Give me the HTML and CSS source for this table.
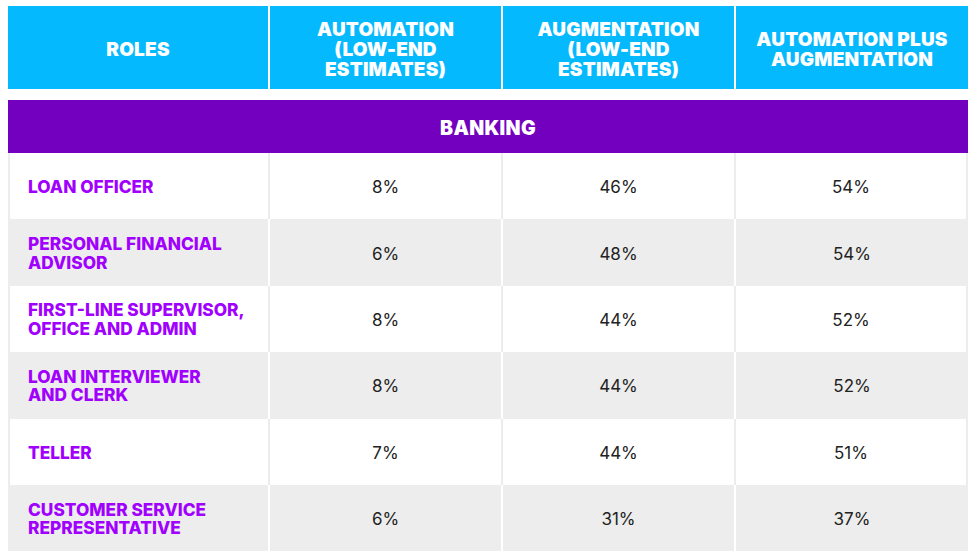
FILE: index.html
```html
<!DOCTYPE html>
<html lang="en">
<head>
<meta charset="utf-8">
<title>Roles — Banking</title>
<link rel="stylesheet" href="styles.css">
</head>
<body>
<div class="table">
  <div class="head">
    <div class="hcell"><span class="ln">ROLES</span></div>
    <div class="hcell"><span class="ln">AUTOMATION</span><span class="ln">(LOW-END</span><span class="ln">ESTIMATES)</span></div>
    <div class="hcell"><span class="ln">AUGMENTATION</span><span class="ln">(LOW-END</span><span class="ln">ESTIMATES)</span></div>
    <div class="hcell"><span class="ln">AUTOMATION PLUS</span><span class="ln">AUGMENTATION</span></div>
  </div>
  <div class="band">BANKING</div>
  <div class="row light">
    <div class="cell role"><span class="rl">LOAN OFFICER</span></div>
    <div class="cell num">8%</div>
    <div class="cell num">46%</div>
    <div class="cell num">54%</div>
  </div>
  <div class="row shade">
    <div class="cell role"><span class="rl">PERSONAL FINANCIAL</span><span class="rl">ADVISOR</span></div>
    <div class="cell num">6%</div>
    <div class="cell num">48%</div>
    <div class="cell num">54%</div>
  </div>
  <div class="row light">
    <div class="cell role"><span class="rl">FIRST-LINE SUPERVISOR,</span><span class="rl">OFFICE AND ADMIN</span></div>
    <div class="cell num">8%</div>
    <div class="cell num">44%</div>
    <div class="cell num">52%</div>
  </div>
  <div class="row shade">
    <div class="cell role"><span class="rl">LOAN INTERVIEWER</span><span class="rl">AND CLERK</span></div>
    <div class="cell num">8%</div>
    <div class="cell num">44%</div>
    <div class="cell num">52%</div>
  </div>
  <div class="row light">
    <div class="cell role"><span class="rl">TELLER</span></div>
    <div class="cell num">7%</div>
    <div class="cell num">44%</div>
    <div class="cell num">51%</div>
  </div>
  <div class="row shade">
    <div class="cell role"><span class="rl">CUSTOMER SERVICE</span><span class="rl">REPRESENTATIVE</span></div>
    <div class="cell num">6%</div>
    <div class="cell num">31%</div>
    <div class="cell num">37%</div>
  </div>
</div>
</body>
</html>
```

FILE: styles.css
```css
* { box-sizing: border-box; }

html, body {
  margin: 0;
  padding: 0;
  background: #ffffff;
}

body {
  padding: 6px 6px 0 8px;
  font-family: "Inter", "Liberation Sans", sans-serif;
}

.table {
  width: 960px;
  display: flex;
  flex-direction: column;
}

.head {
  display: grid;
  grid-template-columns: 260px 231px 231px 232px;
  column-gap: 2px;
  height: 83px;
  background: #ffffff;
}

.hcell {
  background: #05b9ff;
  color: #ffffff;
  font-weight: 900;
  font-size: 19px;
  line-height: 20px;
  letter-spacing: 0.2px;
  text-align: center;
  display: flex;
  flex-direction: column;
  align-items: center;
  justify-content: center;
  padding-top: 4px;
}

.ln {
  display: block;
  height: 20px;
  white-space: nowrap;
}

.band {
  margin-top: 11px;
  height: 53px;
  background: #7300bf;
  color: #ffffff;
  font-weight: 900;
  font-size: 19.5px;
  letter-spacing: 0.3px;
  display: flex;
  align-items: center;
  justify-content: center;
  padding-top: 2px;
}

.row {
  display: grid;
  grid-template-columns: 260px 231px 231px 232px;
  column-gap: 2px;
  height: 66.4px;
}

.row.light { background: #ececec; }
.row.shade { background: #ffffff; }

.cell {
  display: flex;
  align-items: center;
}

.light .cell { background: #ffffff; }
.shade .cell { background: #ecedec; }

.light .cell:first-child { border-left: 2px solid #ececec; }
.light .cell:last-child { border-right: 2px solid #ececec; }

.role {
  flex-direction: column;
  align-items: flex-start;
  justify-content: center;
  padding-left: 20px;
  color: #a100ff;
  font-weight: 800;
  font-size: 17.3px;
  line-height: 18.5px;
  padding-top: 2px;
}

.rl {
  display: block;
  height: 18.5px;
  white-space: nowrap;
}

.light .role { padding-left: 18px; }

.num {
  justify-content: center;
  color: #222222;
  font-weight: 400;
  font-size: 17px;
  padding-top: 2px;
}
```
